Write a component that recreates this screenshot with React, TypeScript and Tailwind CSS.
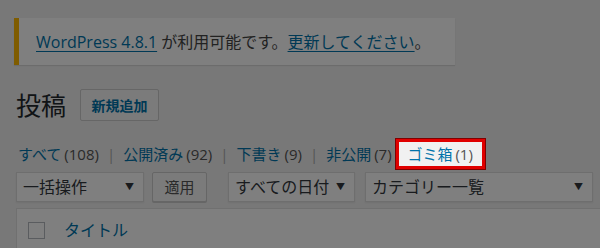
import React from "react";

// WordPress posts list, dimmed, with the trash link highlighted

const font = "font-['Open_Sans','Noto_Sans_CJK_JP',sans-serif]";

function Select({ label, className }: { label: string; className: string }) {
  return (
    <div
      className={`flex h-[30px] items-center justify-between border border-[#ddd] bg-white pl-[6px] pr-[9px] text-[16px] text-[#32373c] shadow-[0_1px_2px_rgba(0,0,0,0.07)] ${className}`}
    >
      <span>{label}</span>
      <span className="text-[9px]">▼</span>
    </div>
  );
}

export default function App() {
  const links = [
    { text: "すべて", count: "(108)" },
    { text: "公開済み", count: "(92)" },
    { text: "下書き", count: "(9)" },
    { text: "非公開", count: "(7)" },
  ];

  return (
    <div className={`relative h-[248px] w-[600px] overflow-hidden bg-[#f1f1f1] ${font}`}>
      {/* Update notice */}
      <div className="ml-[14px] mt-[18px] flex h-[47px] w-[441px] items-center border-l-[5px] border-[#ffb900] bg-white pl-[17px] text-[16px] text-[#444] shadow-[0_1px_1px_rgba(0,0,0,0.1)]">
        <a className="text-[#0073aa] underline underline-offset-[3px]">WordPress 4.8.1</a>
        <span className="ml-[4px]">が利用可能です。</span>
        <a className="text-[#0073aa] underline underline-offset-[3px]">更新してください</a>
        <span>。</span>
      </div>

      {/* Heading */}
      <div className="ml-[16px] mt-[24px] flex items-center gap-[14px]">
        <h1 className="text-[25px] leading-none text-[#23282d]">投稿</h1>
        <button className="h-[32px] w-[79px] rounded-[2px] border border-[#ccc] bg-[#f7f7f7] text-[14px] font-bold text-[#0073aa]">
          新規追加
        </button>
      </div>

      {/* Status filter */}
      <div className="ml-[18px] mt-[18px] flex h-[30px] items-center text-[15px] text-[#555]">
        {links.map((l, i) => (
          <React.Fragment key={l.text}>
            <span className="text-[#0073aa]">{l.text}</span>
            <span className="ml-[3px]">{l.count}</span>
            {i < links.length - 1 && <span className="mx-[8px] text-[#aaa]">|</span>}
          </React.Fragment>
        ))}
        <div className="relative z-20 ml-[4px] flex h-[30px] w-[89px] items-center justify-center border-[3px] border-[#e00000] bg-[#f1f1f1] shadow-[0_0_0_1px_#800000]">
          <span className="text-[#0073aa]">ゴミ箱</span>
          <span className="ml-[3px] text-[#555]">(1)</span>
        </div>
      </div>

      {/* Bulk actions */}
      <div className="ml-[16px] mt-[3px] flex items-center">
        <Select label="一括操作" className="w-[128px]" />
        <button className="ml-[8px] h-[30px] w-[55px] rounded-[2px] border border-[#ccc] bg-[#f7f7f7] text-[15px] text-[#555] shadow-[0_1px_0_#ccc]">
          適用
        </button>
        <Select label="すべての日付" className="ml-[21px] w-[127px]" />
        <Select label="カテゴリー一覧" className="ml-[10px] w-[228px]" />
      </div>

      {/* Table header */}
      <div className="ml-[16px] mt-[6px] flex h-[44px] w-[600px] items-center border border-[#e1e1e1] bg-white pl-[11px]">
        <div className="h-[17px] w-[17px] border border-[#b4b9be] bg-white" />
        <span className="ml-[19px] text-[16px] text-[#0073aa]">タイトル</span>
      </div>

      {/* Dim overlay */}
      <div className="absolute inset-0 z-10 bg-black/50" />
    </div>
  );
}
